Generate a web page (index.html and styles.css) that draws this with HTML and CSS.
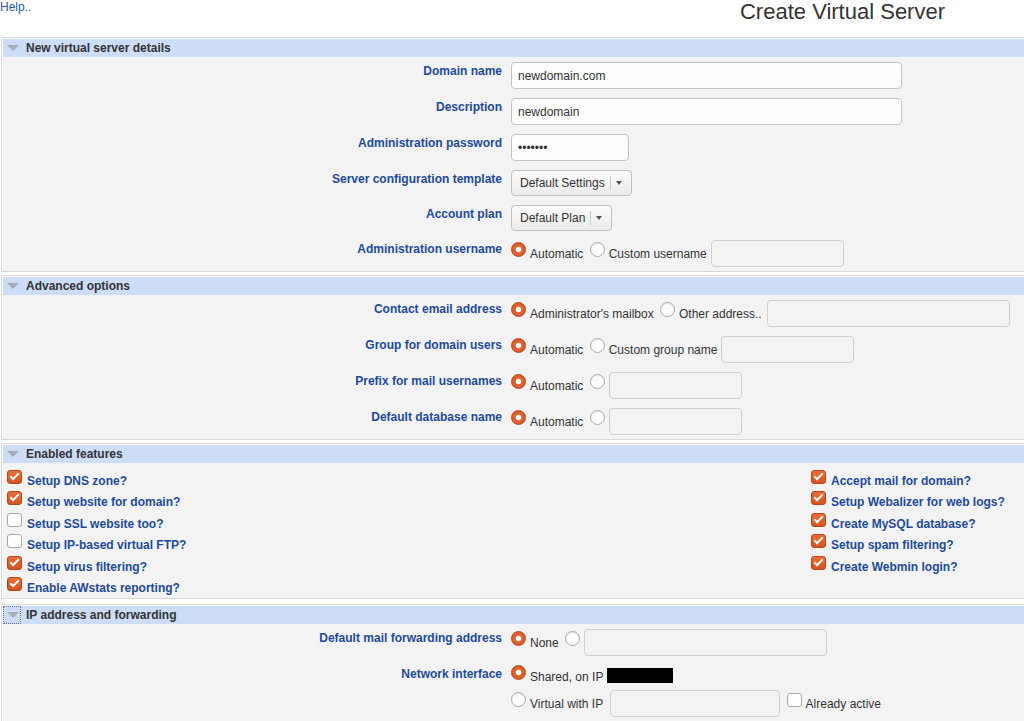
FILE: index.html
```html
<!DOCTYPE html>
<html lang="en">
<head>
<meta charset="utf-8">
<title>Create Virtual Server</title>
<link rel="stylesheet" href="styles.css">
</head>
<body>
<div class="top">
  <a class="help" href="#">Help..</a>
  <h1 class="title">Create Virtual Server</h1>
</div>

<section class="sec">
  <div class="sec-head"><span class="tri"><svg width="12" height="6" viewBox="0 0 12 6"><polygon points="0,0 12,0 6,6" fill="#a9adb7"/></svg></span>New virtual server details</div>
  <div class="sec-body">
    <div class="row"><div class="lbl">Domain name</div><div class="val"><input class="inp w391" type="text" value="newdomain.com"></div></div>
    <div class="row"><div class="lbl">Description</div><div class="val"><input class="inp w391" type="text" value="newdomain"></div></div>
    <div class="row"><div class="lbl">Administration password</div><div class="val"><input class="inp w118" type="password" value="secret1"></div></div>
    <div class="row"><div class="lbl">Server configuration template</div><div class="val"><span class="sel"><span>Default Settings</span><span class="sep"></span><span class="arr"></span></span></div></div>
    <div class="row"><div class="lbl">Account plan</div><div class="val"><span class="sel"><span>Default Plan</span><span class="sep"></span><span class="arr"></span></span></div></div>
    <div class="row"><div class="lbl">Administration username</div><div class="val"><span class="rd on first"></span>Automatic <span class="rd"></span>Custom username <input class="inp w133 off gap1" type="text" disabled></div></div>
  </div>
</section>

<section class="sec">
  <div class="sec-head"><span class="tri"><svg width="12" height="6" viewBox="0 0 12 6"><polygon points="0,0 12,0 6,6" fill="#a9adb7"/></svg></span>Advanced options</div>
  <div class="sec-body">
    <div class="row"><div class="lbl">Contact email address</div><div class="val"><span class="rd on first"></span>Administrator's mailbox <span class="rd"></span>Other address.. <input class="inp w243 off gap2" type="text" disabled></div></div>
    <div class="row"><div class="lbl">Group for domain users</div><div class="val"><span class="rd on first"></span>Automatic <span class="rd"></span>Custom group name <input class="inp w133 off" type="text" disabled></div></div>
    <div class="row"><div class="lbl">Prefix for mail usernames</div><div class="val"><span class="rd on first"></span>Automatic <span class="rd"></span><input class="inp w133 off" type="text" disabled></div></div>
    <div class="row"><div class="lbl">Default database name</div><div class="val"><span class="rd on first"></span>Automatic <span class="rd"></span><input class="inp w133 off" type="text" disabled></div></div>
  </div>
</section>

<section class="sec">
  <div class="sec-head"><span class="tri"><svg width="12" height="6" viewBox="0 0 12 6"><polygon points="0,0 12,0 6,6" fill="#a9adb7"/></svg></span>Enabled features</div>
  <div class="sec-body feats">
    <div class="col">
      <div class="feat"><span class="cb on"></span>Setup DNS zone?</div>
      <div class="feat"><span class="cb on"></span>Setup website for domain?</div>
      <div class="feat"><span class="cb"></span>Setup SSL website too?</div>
      <div class="feat"><span class="cb"></span>Setup IP-based virtual FTP?</div>
      <div class="feat"><span class="cb on"></span>Setup virus filtering?</div>
      <div class="feat"><span class="cb on"></span>Enable AWstats reporting?</div>
    </div>
    <div class="col">
      <div class="feat"><span class="cb on"></span>Accept mail for domain?</div>
      <div class="feat"><span class="cb on"></span>Setup Webalizer for web logs?</div>
      <div class="feat"><span class="cb on"></span>Create MySQL database?</div>
      <div class="feat"><span class="cb on"></span>Setup spam filtering?</div>
      <div class="feat"><span class="cb on"></span>Create Webmin login?</div>
    </div>
  </div>
</section>

<section class="sec sec-ip">
  <div class="sec-head"><span class="tri focus"><svg width="12" height="6" viewBox="0 0 12 6"><polygon points="0,0 12,0 6,6" fill="#a9adb7"/></svg></span>IP address and forwarding</div>
  <div class="sec-body">
    <div class="row"><div class="lbl">Default mail forwarding address</div><div class="val"><span class="rd on first"></span>None <span class="rd"></span><input class="inp w243 off" type="text" disabled></div></div>
    <div class="row"><div class="lbl">Network interface</div><div class="val">
      <div class="line l1"><span class="rd on first"></span>Shared, on IP <span class="redact"></span></div>
      <div class="line"><span class="rd first"></span>Virtual with IP <input class="inp w170 off gap4" type="text" disabled> <span class="cb inl"></span>Already active</div>
    </div></div>
  </div>
</section>
</body>
</html>
```

FILE: styles.css
```css
html, body {
  margin: 0;
  padding: 0;
  background: #fff;
  overflow: hidden;
}

body {
  font-family: "Liberation Sans", Arial, sans-serif;
  font-size: 12px;
  color: #333;
}

.top {
  display: grid;
  grid-template-columns: 1fr auto 79px;
  height: 37px;
}

.help {
  color: #2a5cab;
  text-decoration: none;
  line-height: 14px;
  align-self: start;
}

.title {
  margin: 0;
  font-size: 22px;
  font-weight: normal;
  line-height: 24px;
  color: #333;
}

.sec {
  margin: 0 0 0 1px;
  border: 1px solid #d8d8d8;
  border-right: none;
  padding: 1px 0 0 1px;
  background: #fff;
}

.sec + .sec {
  margin-top: 3px;
}

.sec.sec-ip {
  margin-top: 5px;
}

.sec-head {
  height: 18px;
  background: #cddcf7;
  display: flex;
  align-items: center;
  font-weight: bold;
  color: #333;
  white-space: nowrap;
}

.tri {
  width: 18px;
  height: 18px;
  box-sizing: border-box;
  padding-left: 2px;
  margin-right: 5px;
  display: flex;
  align-items: center;
  justify-content: center;
}

.tri svg {
  display: block;
}

.tri.focus {
  outline: 1px dotted #5b70aa;
  outline-offset: -1px;
}

.sec-body {
  background: #f3f3f3;
}

.row {
  display: grid;
  grid-template-columns: 499px 1fr;
  column-gap: 9px;
  padding: 5px 0 4px;
}

.lbl {
  text-align: right;
  font-weight: bold;
  color: #1e4a9c;
  padding-top: 2px;
  line-height: 14px;
}

.val {
  white-space: nowrap;
  color: #333;
}

.inp {
  box-sizing: border-box;
  height: 27px;
  margin: 0;
  padding: 0 6px;
  border: 1px solid #c4c4c4;
  border-radius: 4px;
  background: #fdfdfd;
  font-family: "Liberation Sans", Arial, sans-serif;
  font-size: 12px;
  color: #333;
  vertical-align: baseline;
  outline: none;
}

.inp.off {
  background: #f3f3f3;
  border-color: #d0d0d0;
}

.inp.gap1 { margin-left: 1px; }
.inp.gap2 { margin-left: 2px; }
.inp.gap4 { margin-left: 4px; }

.w391 { width: 391px; }
.w118 { width: 118px; }
.w133 { width: 133px; }
.w243 { width: 243px; }
.w170 { width: 170px; }

.sel {
  display: inline-flex;
  align-items: center;
  height: 26px;
  box-sizing: border-box;
  border: 1px solid #c2c2c2;
  border-radius: 4px;
  background: linear-gradient(#fbfbfb, #ebebeb);
  padding: 0 9px 0 8px;
  vertical-align: top;
  color: #333;
}

.sel .sep {
  width: 1px;
  height: 14px;
  background: #cdcdcd;
  margin: 0 5px;
}

.sel .arr {
  width: 0;
  height: 0;
  border-left: 3px solid transparent;
  border-right: 3px solid transparent;
  border-top: 4px solid #555;
}

.rd {
  display: inline-block;
  box-sizing: border-box;
  width: 15px;
  height: 15px;
  margin: 0 4px 1px 3px;
  border-radius: 50%;
  border: 1px solid #aaa;
  background: linear-gradient(#fafafa, #ffffff);
  box-shadow: inset 0 1px 1px rgba(0, 0, 0, 0.08);
  vertical-align: baseline;
}

.rd.first {
  margin-left: 0;
}

.rd.on {
  border-color: #b5471c;
  background: radial-gradient(circle at 50% 50%, #fff 0, #fff 2.4px, #e2632f 3.2px, #d4551f 100%);
  box-shadow: none;
}

.line {
  white-space: nowrap;
}

.line.l1 {
  height: 25px;
}

.redact {
  display: inline-block;
  width: 66px;
  height: 15px;
  background: #000;
  vertical-align: -2px;
}

.feats {
  display: grid;
  grid-template-columns: 804px auto;
  padding: 7px 0 0 4px;
}

.feat {
  height: 21.4px;
  line-height: 21.4px;
  white-space: nowrap;
  font-weight: bold;
  color: #1e4a9c;
}

.cb {
  display: inline-block;
  position: relative;
  box-sizing: border-box;
  width: 15px;
  height: 14px;
  margin: 0 5px 0 0;
  border: 1px solid #a8a8a8;
  border-radius: 3px;
  background: #fff;
  vertical-align: 1px;
}

.cb.on {
  border-color: #b3461b;
  background: linear-gradient(#e7703c, #d4541f);
}

.cb.on::after {
  content: "";
  position: absolute;
  left: 4px;
  top: 0px;
  width: 3px;
  height: 7px;
  border: solid #fff;
  border-width: 0 2px 2px 0;
  transform: rotate(45deg);
}

.cb.inl {
  margin: 0 4px 0 3px;
}
```
